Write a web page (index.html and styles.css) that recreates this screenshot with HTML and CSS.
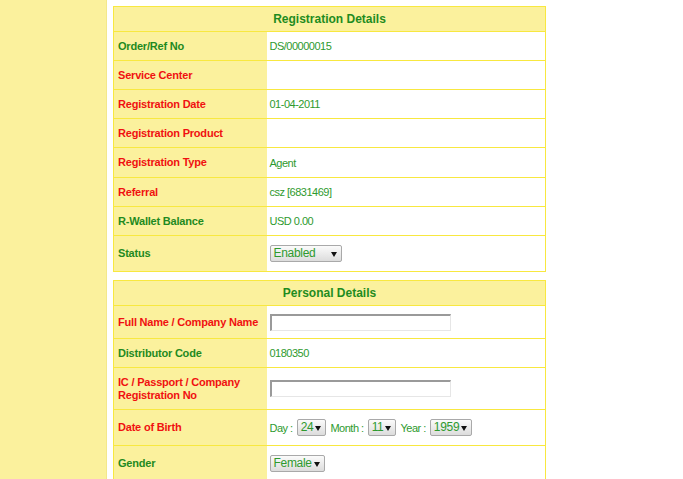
FILE: index.html
```html
<!DOCTYPE html>
<html lang="en">
<head>
  <meta charset="UTF-8" />
  <title>Member Details</title>
  <link rel="stylesheet" href="styles.css">
</head>
<body>
  <div class="sidebar"></div>

  <div class="main">
    <table class="details">
      <colgroup><col class="col-label"><col></colgroup>
      <tr class="head"><th colspan="2">Registration Details</th></tr>
      <tr><td class="label green">Order/Ref No</td><td class="value">DS/00000015</td></tr>
      <tr><td class="label red">Service Center</td><td class="value"></td></tr>
      <tr><td class="label red">Registration Date</td><td class="value">01-04-2011</td></tr>
      <tr><td class="label red">Registration Product</td><td class="value"></td></tr>
      <tr class="tall"><td class="label red">Registration Type</td><td class="value">Agent</td></tr>
      <tr><td class="label red">Referral</td><td class="value">csz [6831469]</td></tr>
      <tr><td class="label green">R-Wallet Balance</td><td class="value">USD 0.00</td></tr>
      <tr class="select-row">
        <td class="label green">Status</td>
        <td class="value"><span class="dropdown w-status">Enabled</span></td>
      </tr>
    </table>

    <table class="details">
      <colgroup><col class="col-label"><col></colgroup>
      <tr class="head"><th colspan="2">Personal Details</th></tr>
      <tr class="input-row">
        <td class="label red">Full Name / Company Name</td>
        <td class="value"><input type="text" class="text-box"></td>
      </tr>
      <tr><td class="label green">Distributor Code</td><td class="value">0180350</td></tr>
      <tr class="double-row">
        <td class="label red">IC / Passport / Company<br>Registration No</td>
        <td class="value"><input type="text" class="text-box"></td>
      </tr>
      <tr class="select-row">
        <td class="label red">Date of Birth</td>
        <td class="value">
          <div class="dob">
            <span>Day :</span><span class="dropdown">24</span>
            <span>Month :</span><span class="dropdown">11</span>
            <span>Year :</span><span class="dropdown">1959</span>
          </div>
        </td>
      </tr>
      <tr class="select-row">
        <td class="label green">Gender</td>
        <td class="value"><span class="dropdown">Female</span></td>
      </tr>
    </table>
  </div>
</body>
</html>
```

FILE: styles.css
```css
body {
  margin: 0;
  padding: 0;
  font-family: 'Liberation Sans', Arial, sans-serif;
  background-color: #ffffff;
  display: flex;
  min-height: 100vh;
  overflow: hidden;
}

.sidebar {
  width: 106px;
  flex-shrink: 0;
  background-color: #fbf19d;
  border-right: 1px solid #f3e88a;
}

.main {
  padding: 6px 0 0 6px;
  display: flex;
  flex-direction: column;
  gap: 8px;
}

.details {
  width: 433px;
  table-layout: fixed;
  border-collapse: collapse;
  border: 1px solid #f8e840;
}

.col-label {
  width: 153px;
}

.details th {
  height: 24px;
  padding: 0;
  background-color: #fbf19d;
  color: #1f8c1f;
  font-size: 12px;
  font-weight: bold;
  text-align: center;
  border: 1px solid #f8e840;
}

.details td {
  height: 28px;
  padding: 0 4px;
  border-top: 1px solid #f8e840;
  border-bottom: 1px solid #f8e840;
  font-size: 11px;
}

.details td.value {
  padding-left: 3px;
}

.details tr.tall td {
  height: 29px;
}

.details tr.select-row td {
  height: 35px;
}

.details tr.input-row td {
  height: 32px;
}

.details tr.double-row td {
  height: 41px;
}

.label {
  background-color: #fbf19d;
  font-weight: bold;
  line-height: 13px;
  letter-spacing: -0.2px;
  white-space: nowrap;
}

.label.green {
  color: #1f8a1f;
}

.label.red {
  color: #f01010;
}

.value {
  background-color: #ffffff;
  color: #2e9a2e;
  letter-spacing: -0.5px;
}

.text-box {
  display: block;
  width: 176px;
  height: 12px;
  margin: 0;
  padding: 1px;
  border: 1px solid #e6e6e6;
  border-top: 2px solid #9a9a9a;
  border-left: 2px solid #9a9a9a;
  background: #ffffff;
}

.dropdown {
  display: inline-block;
  position: relative;
  box-sizing: border-box;
  height: 17px;
  line-height: 15px;
  padding: 0 12px 0 3px;
  border: 1px solid #a9a9a9;
  border-radius: 2px;
  background: linear-gradient(#fbfbfb, #dcdcdc);
  color: #2e9a2e;
  font-size: 12px;
  letter-spacing: -0.3px;
  vertical-align: middle;
}

.dropdown::after {
  content: '';
  position: absolute;
  right: 4px;
  top: 6px;
  border-left: 3px solid transparent;
  border-right: 3px solid transparent;
  border-top: 5px solid #111;
}

.w-status {
  width: 72px;
}

.dob {
  display: flex;
  align-items: center;
  gap: 4px;
  white-space: nowrap;
}
```
